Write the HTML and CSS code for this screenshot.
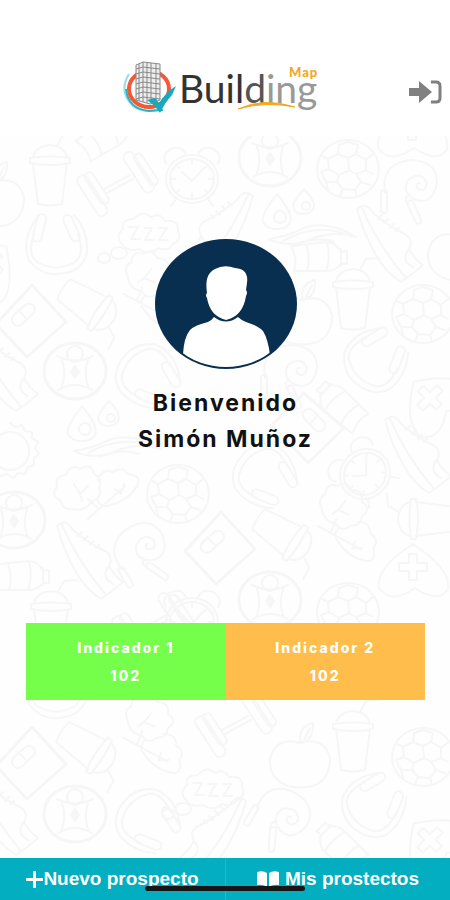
FILE: index.html
```html
<!DOCTYPE html>
<html lang="es">

<head>
    <meta charset="UTF-8">
    <meta name="viewport" content="width=device-width, initial-scale=1">
    <title>Building Map</title>
    <link rel="stylesheet" href="styles.css">
</head>

<body>
    <!-- Header -->
    <header class="header">
        <svg class="logo" viewBox="0 0 200 60" role="img" aria-label="Building Map">
            <path d="M8 14 Q-3 32 12 46 Q22 54 38 49" fill="none" stroke="#9bdce5" stroke-width="2" />
            <path d="M5 29 Q7 49 28 51 L42 50" fill="none" stroke="#27b3c6" stroke-width="2" />
            <ellipse cx="28" cy="29" rx="20" ry="18" fill="none" stroke="#f15a38" stroke-width="4" />
            <path d="M15 5 L22 2 L39 4 V40 L29 44 L15 40 Z" fill="#ededed" stroke="#888" stroke-width="1" />
            <path d="M15 9 L22 7 L39 9 M15 14 L22 12 L39 14 M15 19 L22 17 L39 19 M15 24 L22 22 L39 24 M15 29 L22 27 L39 29 M15 34 L22 32 L39 34 M15 39 L22 37 L39 39 M22 2 V42 M26 3 V43 M30 3 V43 M35 4 V41 M18 4 V41" fill="none" stroke="#888" stroke-width="1" />
            <path d="M26 40 L34 38 L38 43 Q45 32 55 26 L51 35 Q45 41 39 53 Q35 46 26 40 Z" fill="#18a9bd" />
            <text class="logo-name" x="58" y="43"><tspan fill="#333">Buil</tspan><tspan fill="#555">d</tspan><tspan fill="#999">ing</tspan></text>
            <path d="M117 49 Q143 37 174 47 Q144 41 117 49 Z" fill="#f5a81c" stroke="#f5a81c" stroke-width="1" />
            <text class="logo-map" x="168" y="17">Map</text>
        </svg>
        <button class="logout" type="button" aria-label="Salir">
            <svg viewBox="0 0 34 24" aria-hidden="true">
                <path d="M1 8 H11 V1 L24 12 L11 23 V16 H1 Z" fill="#808080" />
                <path d="M23 2 H28 Q32 2 32 6 V18 Q32 22 28 22 H23" fill="none" stroke="#808080" stroke-width="3" />
            </svg>
        </button>
    </header>

    <main class="home">
        <!-- Background doodles -->
        <svg class="doodles" viewBox="0 136 450 722" preserveAspectRatio="xMidYMid slice" aria-hidden="true">
            <defs>
                <g id="cup">
                    <path d="M-17 -12 L-12 29 Q0 32 12 29 L17 -12 M-20 -12 Q0 -8 20 -12 V-17 Q0 -20 -20 -17 Z M-17 -18 Q-14 -29 0 -30 Q14 -29 17 -18 M7 -29 L13 -40 L26 -41" />
                </g>
                <g id="ball">
                    <ellipse rx="31" ry="29" />
                    <path d="M-10 -15 L0 -11 L1 1 L-9 6 L-19 0 L-20 -10 Z M0 -11 L8 -15 L18 -9 L18 1 L8 5 L1 1 M8 5 L13 13 L7 21 L-5 20 L-11 13 L-9 6 M-10 -15 L-9 -24 L0 -27 L10 -24 L8 -15 M18 1 L25 5 M13 13 L22 16 M-11 13 L-22 13 L-27 3 L-19 0 M-20 -10 L-26 -13 M18 -9 L25 -15 M-22 13 L-20 21 M7 21 L9 27 M-5 20 L-8 27" />
                </g>
                <g id="badge">
                    <ellipse rx="31" ry="28" stroke-width="3" />
                    <circle cy="-17" r="8" />
                    <path d="M-18 -15 Q0 -6 18 -15 M-13 -11 Q-8 3 -14 18 M13 -11 Q8 3 14 18 M-17 19 Q0 9 17 19" />
                    <path d="M0 -5 L4 1 L0 7 L-4 1 Z" fill="#f6f6f6" />
                </g>
                <g id="clock">
                    <ellipse rx="26" ry="24" />
                    <ellipse rx="22" ry="20" />
                    <path d="M-26 -15 Q-31 -22 -23 -29 Q-11 -35 -6 -25 M26 -15 Q31 -22 23 -29 Q11 -35 6 -25 M-10 -7 L0 2 L12 -11 M-16 20 L-21 27 M16 20 L21 27 M0 -19 V-15 M0 19 V15 M-21 0 H-17 M21 0 H17 M-15 -13 L-13 -11 M15 13 L13 11 M-15 13 L-13 11 M15 -13 L13 -11" />
                </g>
                <g id="headphones">
                    <path d="M-17 -29 Q-36 -5 -27 16 Q-15 32 3 30 Q26 28 31 9 Q33 -12 18 -29 M-22 -10 Q-29 10 -19 18 Q0 29 19 18 Q29 10 22 -10" />
                    <rect x="-21" y="-30" width="9" height="28" rx="5" transform="rotate(14 -16 -16)" />
                    <rect x="11" y="-30" width="9" height="28" rx="5" transform="rotate(-24 16 -16)" />
                </g>
                <g id="dumbbell">
                    <path d="M-13 3 L13 -11 M-10 7 L16 -7" />
                    <rect x="-31" y="-14" width="11" height="46" rx="5" transform="rotate(-33 -24 8)" />
                    <rect x="-23" y="-16" width="9" height="36" rx="4" transform="rotate(-33 -19 5)" />
                    <rect x="16" y="-37" width="11" height="46" rx="5" transform="rotate(-33 22 -14)" />
                    <rect x="24" y="-34" width="9" height="36" rx="4" transform="rotate(-33 28 -17)" />
                </g>
                <g id="sleep">
                    <path d="M-25 11 Q-34 3 -25 -5 Q-27 -15 -14 -15 Q-6 -25 3 -17 Q12 -22 17 -13 Q31 -15 30 -3 Q34 6 25 10 Q20 18 10 14 Q1 22 -9 15 Q-20 18 -25 11 Z M-19 -7 H-10 L-17 5 H-8 M-4 -6 H4 L-3 6 H6 M11 -6 H19 L11 6 H20" />
                    <ellipse cx="-29" cy="19" rx="8" ry="6" />
                    <ellipse cx="-44" cy="24" rx="6" ry="5" />
                </g>
                <g id="drops">
                    <path d="M-10 -14 Q-27 8 -24 14 Q-19 22 -10 21 Q2 21 4 12 Q4 3 -10 -14 Z M17 -19 Q6 -6 6 -2 Q8 7 17 6 Q27 5 27 -3 Q26 -10 17 -19 Z" />
                    <circle cx="-7" cy="9" r="6" />
                    <circle cx="19" cy="-2" r="4" />
                    <path d="M-18 31 Q2 28 19 19 Q43 13 69 29 Q48 23 29 29 Q4 42 -18 31 Z M-4 33 Q29 15 58 26 M8 37 Q31 28 47 34" />
                </g>
                <g id="bottle">
                    <path d="M-27 -12 Q-10 -14 9 -16 Q19 -15 23 -6 L29 -7 V6 L23 6 Q18 13 8 13 Q-10 13 -24 13 Q-20 0 -27 -12 Z M-12 -13 Q-7 0 -11 13 M9 -16 Q13 0 8 13 M23 -9 V8" />
                </g>
                <g id="sneaker">
                    <path d="M-31 -34 Q-22 -42 -15 -30 Q-2 -19 13 -11 Q27 -5 21 6 Q27 17 35 22 Q25 31 13 39 Q-2 30 -12 12 Q-24 -8 -31 -34 Z M-26 -35 Q-10 2 18 35 M-10 -24 L-6 -28 M-4 -20 L0 -24 M2 -15 L6 -19 M8 -12 L11 -15 M21 6 Q12 17 25 24" />
                </g>
                <g id="rope">
                    <path d="M-25 8 Q-30 -22 1 -25 Q28 -24 27 -1 Q22 20 6 15 Q-9 8 -2 -5 Q11 -15 17 -2 Q15 9 7 3 Q5 -2 10 -2 M-1 9 Q-7 14 -2 19" />
                    <rect x="-29" y="5" width="6" height="23" rx="3" />
                    <rect x="-1" y="15" width="6" height="25" rx="3" transform="rotate(-25 2 22)" />
                </g>
                <g id="scale">
                    <path d="M-1 -36 L33 1 L-6 36 L-37 3 Z" stroke-width="3" />
                    <rect x="-23" y="-12" width="27" height="12" rx="6" transform="rotate(-42 -10 -6)" />
                    <path d="M-15 -11 L-7 -3" />
                </g>
                <g id="trees">
                    <path d="M-12 27 L25 -6 M-12 7 L-2 16 M-28 17 Q-38 18 -39 9 Q-50 3 -43 -5 Q-46 -16 -34 -17 Q-30 -29 -19 -23 Q-9 -30 -6 -18 Q3 -14 -1 -4 Q3 6 -8 9 Q-14 20 -28 17 Z M-2 -12 Q2 -24 13 -20 Q22 -27 28 -18 Q43 -16 37 -6 Q28 9 10 13 Q1 17 -3 7 M-26 -8 L-20 2 L-12 -6 M-20 2 L-18 9 M15 -3 L21 2 L24 -8" />
                </g>
                <g id="heart">
                    <path d="M0 -26 Q39 0 35 19 Q26 34 2 18 Q-22 35 -34 18 Q-37 -3 0 -26 Z M-4 -16 H4 V-7 H14 V1 H4 V10 H-4 V1 H-14 V-7 H-4 Z" />
                </g>
                <g id="apple">
                    <path d="M0 -21 Q24 -28 30 -6 Q30 17 12 22 Q0 25 -12 22 Q-31 15 -30 -5 Q-24 -28 0 -21 Z M0 -22 Q-1 -38 13 -41 Q14 -26 4 -22 Z M4 -24 L10 -36" />
                </g>
                <g id="sun">
                    <ellipse rx="19" ry="19" />
                    <path d="M0 -28 L5 -24 L12 -26 L15 -20 L22 -19 L22 -13 L28 -9 L25 -3 L29 3 L24 7 L24 14 L18 16 L15 23 L8 22 L3 27 L-3 23 L-10 25 L-14 19" />
                </g>
            </defs>
            <g class="doodle-lines">
                <use href="#cup" x="50" y="175" />
                <use href="#cup" x="353" y="299" />
                <use href="#cup" x="353" y="741" />
                <use href="#cup" x="51" y="621" />
                <use href="#cup" transform="translate(88 305) rotate(123)" />
                <use href="#cup" transform="translate(87 748) rotate(123)" />
                <use href="#cup" transform="translate(283 535) rotate(123)" />
                <use href="#cup" transform="translate(428 519) rotate(-90)" />
                <use href="#dumbbell" x="117" y="186" />
                <use href="#dumbbell" x="152" y="627" />
                <use href="#dumbbell" x="235" y="727" />
                <use href="#clock" x="192" y="179" />
                <use href="#clock" x="192" y="622" />
                <use href="#clock" transform="translate(365 474) rotate(-45)" />
                <use href="#headphones" x="56" y="244" />
                <use href="#headphones" x="56" y="688" />
                <use href="#headphones" transform="translate(375 360) rotate(45)" />
                <use href="#headphones" transform="translate(373 805) rotate(45)" />
                <use href="#headphones" transform="translate(265 475) rotate(135)" />
                <use href="#headphones" transform="translate(148 820) rotate(135)" />
                <use href="#headphones" transform="translate(148 375) rotate(135)" />
                <use href="#badge" x="270" y="158" />
                <use href="#badge" x="75" y="371" />
                <use href="#badge" x="14" y="520" />
                <use href="#badge" x="270" y="600" />
                <use href="#badge" x="75" y="814" />
                <use href="#ball" x="348" y="169" />
                <use href="#ball" x="423" y="314" />
                <use href="#ball" x="178" y="494" />
                <use href="#ball" x="348" y="612" />
                <use href="#ball" x="423" y="757" />
                <use href="#sleep" x="148" y="234" />
                <use href="#sleep" x="212" y="790" />
                <use href="#drops" x="287" y="208" />
                <use href="#drops" x="92" y="420" />
                <use href="#bottle" x="318" y="258" />
                <use href="#bottle" x="20" y="577" />
                <use href="#bottle" transform="translate(342 406) rotate(225)" />
                <use href="#bottle" transform="translate(342 847) rotate(225)" />
                <use href="#bottle" transform="translate(105 138) rotate(-30)" />
                <use href="#sneaker" x="388" y="243" />
                <use href="#sneaker" x="88" y="560" />
                <use href="#sneaker" x="416" y="454" />
                <use href="#sneaker" x="3" y="372" />
                <use href="#sneaker" x="3" y="816" />
                <use href="#sneaker" transform="translate(215 835) scale(-1 1)" />
                <use href="#sneaker" transform="translate(222 230) scale(-1 1)" />
                <use href="#rope" x="410" y="185" />
                <use href="#rope" transform="translate(140 550) rotate(-30)" />
                <use href="#rope" transform="translate(282 814) rotate(30)" />
                <use href="#rope" x="290" y="370" />
                <use href="#scale" x="33" y="321" />
                <use href="#scale" x="33" y="763" />
                <use href="#scale" x="222" y="548" />
                <use href="#scale" transform="translate(308 430) rotate(88)" />
                <use href="#trees" x="100" y="492" />
                <use href="#trees" transform="translate(153 740) rotate(70)" />
                <use href="#trees" transform="translate(347 528) rotate(70)" />
                <use href="#trees" transform="translate(153 296) rotate(70)" />
                <use href="#heart" x="413" y="570" />
                <use href="#heart" transform="translate(432 400) rotate(-45)" />
                <use href="#heart" transform="translate(432 842) rotate(-45)" />
                <use href="#heart" transform="translate(-12 265) rotate(45)" />
                <use href="#heart" x="412" y="130" />
                <use href="#apple" x="-6" y="203" />
                <use href="#apple" x="300" y="764" />
                <use href="#apple" x="302" y="321" />
                <use href="#apple" x="458" y="257" />
                <use href="#sun" x="10" y="451" />
            </g>
        </svg>

        <!-- User -->
        <section class="user">
            <svg class="avatar" viewBox="0 0 142 132" role="img" aria-label="Foto de perfil">
                <defs>
                    <clipPath id="face-clip">
                        <ellipse cx="71" cy="65" rx="69" ry="63" />
                    </clipPath>
                </defs>
                <ellipse cx="71" cy="65" rx="71" ry="65" fill="#082f50" />
                <g clip-path="url(#face-clip)" fill="#fff">
                    <path d="M28 132 V115 Q29 98 35 91 Q40 86 53 83 Q57 81 59 78 Q71 87 83 78 Q86 81 91 83 Q104 87 108 92 Q113 100 115 116 V132 Z" />
                    <path d="M52 54 Q49 35 60 30 Q69 25 80 29 Q94 30 92 44 L91 51 Q93 53 91 57 Q88 77 71 81 Q55 77 52 59 Q50 56 52 54 Z" />
                </g>
            </svg>
            <h1 class="welcome">Bienvenido<br>Simón Muñoz</h1>
        </section>

        <!-- Indicators -->
        <section class="indicators">
            <div class="indicator indicator-green">
                <h2>Indicador 1</h2>
                <p>102</p>
            </div>
            <div class="indicator indicator-orange">
                <h2>Indicador 2</h2>
                <p>102</p>
            </div>
        </section>
    </main>

    <!-- Bottom menu -->
    <nav class="menu">
        <a href="#nuevo">
            <svg class="icon-plus" viewBox="0 0 17 17" aria-hidden="true">
                <path d="M8.5 1 V16 M1 8.5 H16" stroke="#fff" stroke-width="3" stroke-linecap="round" />
            </svg>
            <span>Nuevo prospecto</span>
        </a>
        <a class="menu-book" href="#prospectos">
            <svg class="icon-book" viewBox="0 0 22 16" aria-hidden="true">
                <path d="M0 1 Q6 -1 10 2 V16 Q6 13 0 14 Z M22 1 Q16 -1 12 2 V16 Q16 13 22 14 Z" fill="#fff" />
            </svg>
            <span>Mis prostectos</span>
        </a>
        <div class="home-bar"></div>
    </nav>
</body>

</html>
```
FILE: styles.css
```css
/* Resetting default margins and padding */
* {
    margin: 0;
    padding: 0;
    box-sizing: border-box;
}

/* Body and overall layout */
body {
    display: flex;
    flex-direction: column;
    min-height: 100vh;
    font-family: Inter, sans-serif;
    background-color: #ffffff;
    color: #111111;
}

/* Header */
.header {
    display: grid;
    grid-template-columns: 1fr auto 1fr;
    align-items: center;
    padding: 60px 8px 16px 0;
}

.logo {
    grid-column: 2;
    width: 200px;
    height: 60px;
}

.logo-name {
    font-family: Lato, sans-serif;
    font-size: 39px;
    font-weight: 400;
}

.logo-map {
    font-family: Lato, sans-serif;
    font-size: 13px;
    font-weight: 900;
    letter-spacing: 1px;
    fill: #f5a81c;
}

.logout {
    justify-self: end;
    padding-top: 4px;
    border: none;
    background: none;
    cursor: pointer;
}

.logout svg {
    display: block;
    width: 34px;
    height: 24px;
}

/* Main area */
.home {
    position: relative;
    flex: 1;
    display: flex;
    flex-direction: column;
    justify-content: space-between;
    padding: 103px 25px 158px 26px;
    background-color: #fefefe;
}

.doodles {
    position: absolute;
    inset: 0;
    width: 100%;
    height: 100%;
}

.doodle-lines {
    fill: none;
    stroke: #f6f6f6;
    stroke-width: 2;
    stroke-linejoin: round;
    stroke-linecap: round;
}

/* User section */
.user {
    position: relative;
    text-align: center;
}

.avatar {
    display: block;
    width: 142px;
    height: 132px;
    margin: 0 auto 14px;
}

.welcome {
    font-size: 23px;
    font-weight: 700;
    line-height: 36px;
    letter-spacing: 2px;
}

/* Indicators */
.indicators {
    position: relative;
    display: grid;
    grid-template-columns: 1fr 1fr;
}

.indicator {
    padding: 11px 8px 10px;
    text-align: center;
    color: #ffffff;
}

.indicator h2,
.indicator p {
    font-size: 14px;
    font-weight: 800;
    line-height: 28px;
    letter-spacing: 2px;
}

.indicator-green {
    background-color: #75ff4b;
}

.indicator-orange {
    background-color: #ffbd4c;
}

/* Bottom menu */
.menu {
    position: relative;
    display: grid;
    grid-template-columns: 1fr 1fr;
    height: 42px;
    background-color: #02aec0;
}

.menu a {
    display: flex;
    align-items: center;
    justify-content: center;
    color: #ffffff;
    font-family: "Liberation Sans", sans-serif;
    font-size: 19px;
    font-weight: 700;
    text-decoration: none;
}

.menu-book {
    gap: 6px;
    border-left: 1px solid #7398a5;
}

.icon-plus {
    width: 17px;
    height: 17px;
}

.icon-book {
    width: 22px;
    height: 16px;
}

/* Phone home bar */
.home-bar {
    position: absolute;
    left: 50%;
    bottom: 9px;
    width: 160px;
    height: 5px;
    border-radius: 3px;
    background-color: #161616;
    transform: translateX(-50%);
}
```
